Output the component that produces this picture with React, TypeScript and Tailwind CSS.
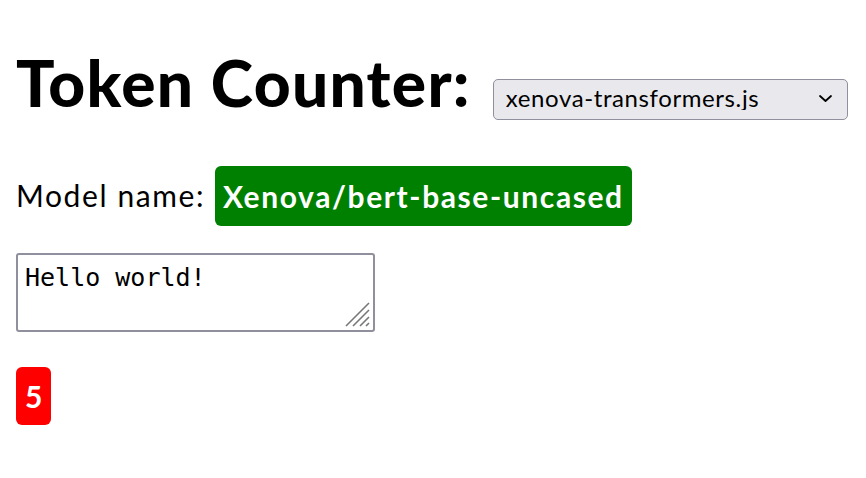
import { useState } from "react";

const tokenizers = ["xenova-transformers.js", "tiktoken", "gpt-tokenizer"];

export default function App() {
  const [lib, setLib] = useState(tokenizers[0]);
  const [text, setText] = useState("Hello world!");

  return (
    <div className="flex flex-col items-start px-4 pt-[45px] font-['Lato',sans-serif] text-black">
      <div className="flex items-baseline gap-[22px]">
        <h1 className="text-[64px] font-black leading-[1.2] tracking-[1.3px]">Token Counter:</h1>
        <div className="relative">
          <select
            value={lib}
            onChange={(e) => setLib(e.target.value)}
            className="h-[41px] w-[355px] appearance-none rounded-[5px] border border-[#8f8f9d] bg-[#e9e9ed] pb-[2px] pl-3 font-['Lato',sans-serif] text-[24px] leading-none tracking-[0.6px]"
          >
            {tokenizers.map((t) => (
              <option key={t}>{t}</option>
            ))}
          </select>
          <svg
            className="pointer-events-none absolute right-[16px] top-[16px]"
            width="13"
            height="7"
            viewBox="0 0 13 7"
            fill="none"
            stroke="black"
            strokeWidth="1.8"
            strokeLinecap="round"
            strokeLinejoin="round"
          >
            <path d="M1 1l5.5 5 5.5-5" />
          </svg>
        </div>
      </div>

      <div className="mt-[44px] flex items-center gap-[10px] text-[30px] tracking-[1.6px]">
        <span>Model name:</span>
        <span className="rounded-[6px] bg-[#008000] px-2 py-[8px] font-bold leading-[44px] text-white">
          Xenova/bert-base-uncased
        </span>
      </div>

      <div className="relative mt-[27px]">
        <textarea
          value={text}
          onChange={(e) => setText(e.target.value)}
          className="block h-[79px] w-[359px] resize-none rounded-[3px] border-2 border-[#8f8f9d] px-[7px] pt-[8px] pb-[4px] font-['DejaVu_Sans_Mono',monospace] text-[25px] leading-[1.2]"
        />
        <svg
          className="pointer-events-none absolute bottom-[5px] right-[5px]"
          width="25"
          height="25"
          viewBox="0 0 25 25"
          stroke="#777"
          strokeWidth="1.6"
        >
          <path d="M1 24L24 1M8 24L24 8M15 24L24 15M21 24L24 21" />
        </svg>
      </div>

      <span className="mt-[35px] rounded-[6px] bg-[#ff0000] px-[9px] py-[7px] text-[30px] font-bold leading-[44px] text-white">
        5
      </span>
    </div>
  );
}
